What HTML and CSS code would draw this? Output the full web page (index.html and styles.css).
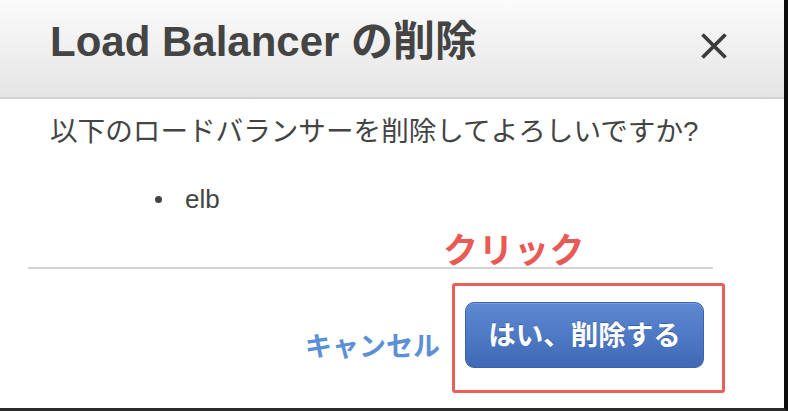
FILE: index.html
```html
<!DOCTYPE html>
<html lang="ja">
<head>
<meta charset="utf-8">
<title>Load Balancer の削除</title>
<link rel="stylesheet" href="styles.css">
</head>
<body>
<div class="dialog">
  <div class="header">
    <h1 class="title">Load Balancer の削除</h1>
    <button class="close" aria-label="閉じる">
      <svg width="28" height="28" viewBox="0 0 28 28"><path d="M2.5 2.5 L25.5 25.5 M25.5 2.5 L2.5 25.5" stroke="#3c3c3c" stroke-width="3.8" stroke-linecap="butt"/></svg>
    </button>
  </div>
  <div class="content">
    <p class="question">以下のロードバランサーを削除してよろしいですか?</p>
    <ul class="items">
      <li>elb</li>
    </ul>
  </div>
  <div class="divider-wrap">
    <span class="annotation">クリック</span>
    <div class="divider"></div>
  </div>
  <div class="footer">
    <a class="cancel" href="#">キャンセル</a>
    <div class="highlight">
      <button class="primary">はい、削除する</button>
    </div>
  </div>
</div>
</body>
</html>
```

FILE: styles.css
```css
html, body {
  margin: 0;
  padding: 0;
  background: #ffffff;
}
body {
  width: 788px;
  height: 411px;
  overflow: hidden;
  font-family: "Liberation Sans", "Noto Sans CJK JP", sans-serif;
}
.dialog {
  box-sizing: border-box;
  width: 788px;
  height: 411px;
  border-right: 4px solid #0d0d0d;
  border-bottom: 3px solid #2a2a2a;
  background: #fff;
  position: relative;
}
.header {
  box-sizing: border-box;
  height: 99px;
  padding: 20px 56px 0 50px;
  display: flex;
  justify-content: space-between;
  align-items: flex-start;
  background: linear-gradient(#fbfbfb, #e5e5e5);
  border-bottom: 2px solid #d2d2d2;
}
.title {
  margin: 0;
  font-size: 42px;
  line-height: 44px;
  font-weight: bold;
  color: #444444;
}
.close {
  margin-top: 12px;
  padding: 0;
  border: 0;
  background: transparent;
  width: 28px;
  height: 28px;
}
.close svg { display: block; }
.content {
  padding: 0 50px;
}
.question {
  margin: 13px 0 0;
  font-size: 27.6px;
  line-height: 40px;
  color: #444444;
}
.items {
  list-style: none;
  margin: 27px 0 0;
  padding-left: 105px;
  font-size: 26px;
  line-height: 40px;
  color: #444444;
}
.items li::before {
  content: "";
  display: inline-block;
  width: 7px;
  height: 7px;
  border-radius: 50%;
  background: #444444;
  margin-right: 23px;
  vertical-align: 5px;
}
.divider-wrap {
  position: relative;
  margin: 48px 71px 0 28px;
}
.divider {
  height: 2px;
  background: #d4d4d4;
}
.annotation {
  position: absolute;
  left: 415px;
  top: -37px;
  font-size: 35px;
  line-height: 42px;
  font-weight: bold;
  color: #e85a55;
  letter-spacing: 0.5px;
}
.footer {
  display: flex;
  justify-content: flex-end;
  align-items: center;
  gap: 12px;
  padding: 14px 59px 0 0;
}
.cancel {
  font-size: 27px;
  font-weight: bold;
  color: #5b8fd6;
  text-decoration: none;
  margin-top: 12px;
}
.highlight {
  border: 3px solid #eb5f5b;
  border-radius: 3px;
  padding: 16px 18px 22px 10px;
}
.primary {
  display: block;
  width: 239px;
  height: 66px;
  border: 1px solid #3b62ad;
  border-radius: 9px;
  background: linear-gradient(#5d89d3, #3f69b6);
  color: #ffffff;
  font-family: "Liberation Sans", "Noto Sans CJK JP", sans-serif;
  font-size: 27.5px;
  font-weight: bold;
  text-shadow: 0 -1px 0 rgba(0,0,0,0.25);
  box-shadow: inset 0 1px 0 rgba(255,255,255,0.2);
  padding: 0 0 4px;
}
```
